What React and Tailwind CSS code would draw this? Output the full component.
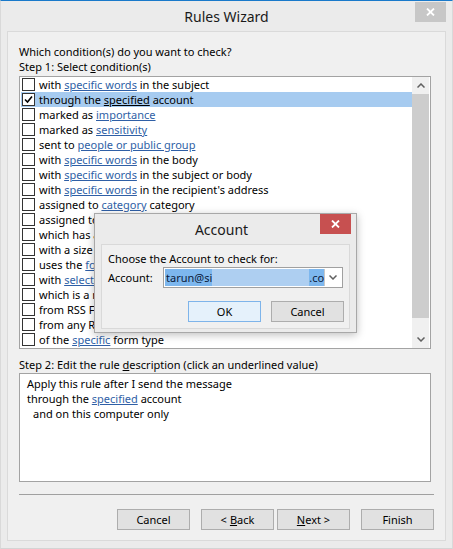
const rows = [
  ["with ", "specific words", " in the subject"],
  ["through the ", "specified", " account"],
  ["marked as ", "importance", ""],
  ["marked as ", "sensitivity", ""],
  ["sent to ", "people or public group", ""],
  ["with ", "specific words", " in the body"],
  ["with ", "specific words", " in the subject or body"],
  ["with ", "specific words", " in the recipient's address"],
  ["assigned to ", "category", " category"],
  ["assigned to any category", "", ""],
  ["which has an attachment", "", ""],
  ["with a size ", "in a specific range", ""],
  ["uses the ", "form name", " form"],
  ["with ", "selected properties", " of documents or forms"],
  ["which is a meeting invitation or update", "", ""],
  ["from RSS Feeds with ", "specified text", " in the title"],
  ["from any RSS Feed", "", ""],
  ["of the ", "specific", " form type"],
];

function CloseX({ size = 9 }) {
  return (
    <svg width={size} height={size - 1} viewBox="0 0 9 8">
      <path d="M1 0.5 L8 7.5 M8 0.5 L1 7.5" stroke="white" strokeWidth="1.8" />
    </svg>
  );
}

function Checkbox({ checked }) {
  return (
    <span className="w-[13px] h-[13px] shrink-0 border border-[#333333] bg-white flex items-center justify-center">
      {checked && (
        <svg width="9" height="9" viewBox="0 0 9 9">
          <path d="M1 4.5 L3.5 7 L8 1.5" stroke="black" strokeWidth="1.6" fill="none" />
        </svg>
      )}
    </span>
  );
}

function Chevron({ up }) {
  return (
    <svg width="8" height="5" viewBox="0 0 8 5">
      <path
        d={up ? "M0.5 4.5 L4 1 L7.5 4.5" : "M0.5 0.5 L4 4 L7.5 0.5"}
        stroke="#606060"
        strokeWidth="1.5"
        fill="none"
      />
    </svg>
  );
}

function Btn({ children, primary }) {
  return (
    <div
      className={
        "w-[73px] h-[21px] flex items-center justify-center border " +
        (primary ? "border-[#7eb4ea] bg-[#e5f1fb]" : "border-[#adadad] bg-[#e1e1e1]")
      }
    >
      {children}
    </div>
  );
}

export default function App() {
  return (
    <div className="relative w-[453px] h-[549px] bg-[#ebebeb] border-t border-[#1979ca] border-x border-b border-x-[#d9d9d9] border-b-[#d4d4d4] text-[11px] text-black overflow-hidden font-['Noto_Sans',sans-serif] leading-[15px]">
      {/* title bar */}
      <div className="relative h-[30px] flex items-center justify-center">
        <span className="text-[14px] text-[#1a1a1a]">Rules Wizard</span>
        <div className="absolute top-[1px] right-[6px] w-[31px] h-[20px] bg-[#c7c7c7] flex items-center justify-center">
          <CloseX />
        </div>
      </div>

      {/* main panel */}
      <div className="ml-[6px] w-[439px] h-[510px] border border-[#dadada] bg-[#f0f0f0] pl-[11px] pt-[12px]">
        <div>Which condition(s) do you want to check?</div>
        <div>
          Step 1: Select <span className="underline">c</span>ondition(s)
        </div>

        {/* conditions list */}
        <div className="mt-[2px] w-[412px] h-[273px] border border-[#a3a3a3] bg-white flex">
          <div className="flex-1 pl-[1px]">
            {rows.map((r, i) => (
              <div
                key={i}
                className={"h-[15px] flex items-center gap-[4px] pl-[1px] whitespace-nowrap " + (i === 1 ? "bg-[#a6cbf0]" : "")}
              >
                <Checkbox checked={i === 1} />
                <span>
                  {r[0]}
                  {r[1] && (
                    <span className={i === 1 ? "underline" : "underline text-[#2f5fa6]"}>{r[1]}</span>
                  )}
                  {r[2]}
                </span>
              </div>
            ))}
          </div>
          <div className="w-[17px] mr-[1px] bg-[#f0f0f0] flex flex-col">
            <div className="h-[17px] flex items-center justify-center">
              <Chevron up />
            </div>
            <div className="h-[224px] bg-[#cdcdcd]" />
            <div className="flex-1" />
            <div className="h-[17px] flex items-center justify-center">
              <Chevron />
            </div>
          </div>
        </div>

        <div className="mt-[8px]">
          Step 2: Edit the rule <span className="underline">d</span>escription (click an underlined value)
        </div>
        <div className="mt-[1px] w-[412px] h-[109px] border border-[#a3a3a3] bg-white pl-[7px] pt-[2px]">
          <div>Apply this rule after I send the message</div>
          <div>
            through the <span className="underline text-[#2f5fa6]">specified</span> account
          </div>
          <div className="pl-[6px]">and on this computer only</div>
        </div>

        <div className="mt-[12px] w-[415px] h-[1px] bg-[#a0a0a0]" />

        <div className="mt-[14px] w-[415px] flex justify-end">
          <Btn>Cancel</Btn>
          <div className="w-[11px]" />
          <Btn>
            &lt; <span className="underline ml-[3px]">B</span>ack
          </Btn>
          <div className="w-[3px]" />
          <Btn>
            <span className="underline">N</span>ext &gt;
          </Btn>
          <div className="w-[11px]" />
          <Btn>Finish</Btn>
        </div>
      </div>

      {/* Account dialog */}
      <div className="absolute left-[93px] top-[212px] w-[263px] h-[120px] bg-[#ebebeb] border border-[#a8a8a8] shadow-[0_2px_8px_rgba(0,0,0,0.25)]">
        <div className="relative h-[30px] flex items-center justify-center pr-[8px]">
          <span className="text-[14px] text-[#1a1a1a]">Account</span>
          <div className="absolute top-0 right-[5px] w-[31px] h-[20px] bg-[#c75050] flex items-center justify-center">
            <CloseX />
          </div>
        </div>
        <div className="ml-[6px] w-[249px] h-[85px] border border-[#d9d9d9] bg-[#f0f0f0] pl-[6px] pr-[5px] pt-[6px]">
          <div>Choose the Account to check for:</div>
          <div className="mt-[1px] flex items-center">
            <span className="w-[55px]">Account:</span>
            <div className="w-[180px] h-[21px] border border-[#a0a0a0] bg-white flex items-stretch p-[1px]">
              <div className="flex-1 flex items-center bg-[#7db7ee] overflow-hidden whitespace-nowrap text-[#0a1a3a]">
                <span className="pl-[1px]">tarun@si</span>
                <span className="w-[97px] h-full shrink-0 bg-[#aecff1]" />
                <span>.co</span>
              </div>
              <div className="w-[17px] flex items-center justify-center border-l border-[#c8c8c8]">
                <Chevron />
              </div>
            </div>
          </div>
          <div className="mt-[13px] flex justify-end gap-[10px]">
            <Btn primary>OK</Btn>
            <Btn>Cancel</Btn>
          </div>
        </div>
      </div>
    </div>
  );
}
